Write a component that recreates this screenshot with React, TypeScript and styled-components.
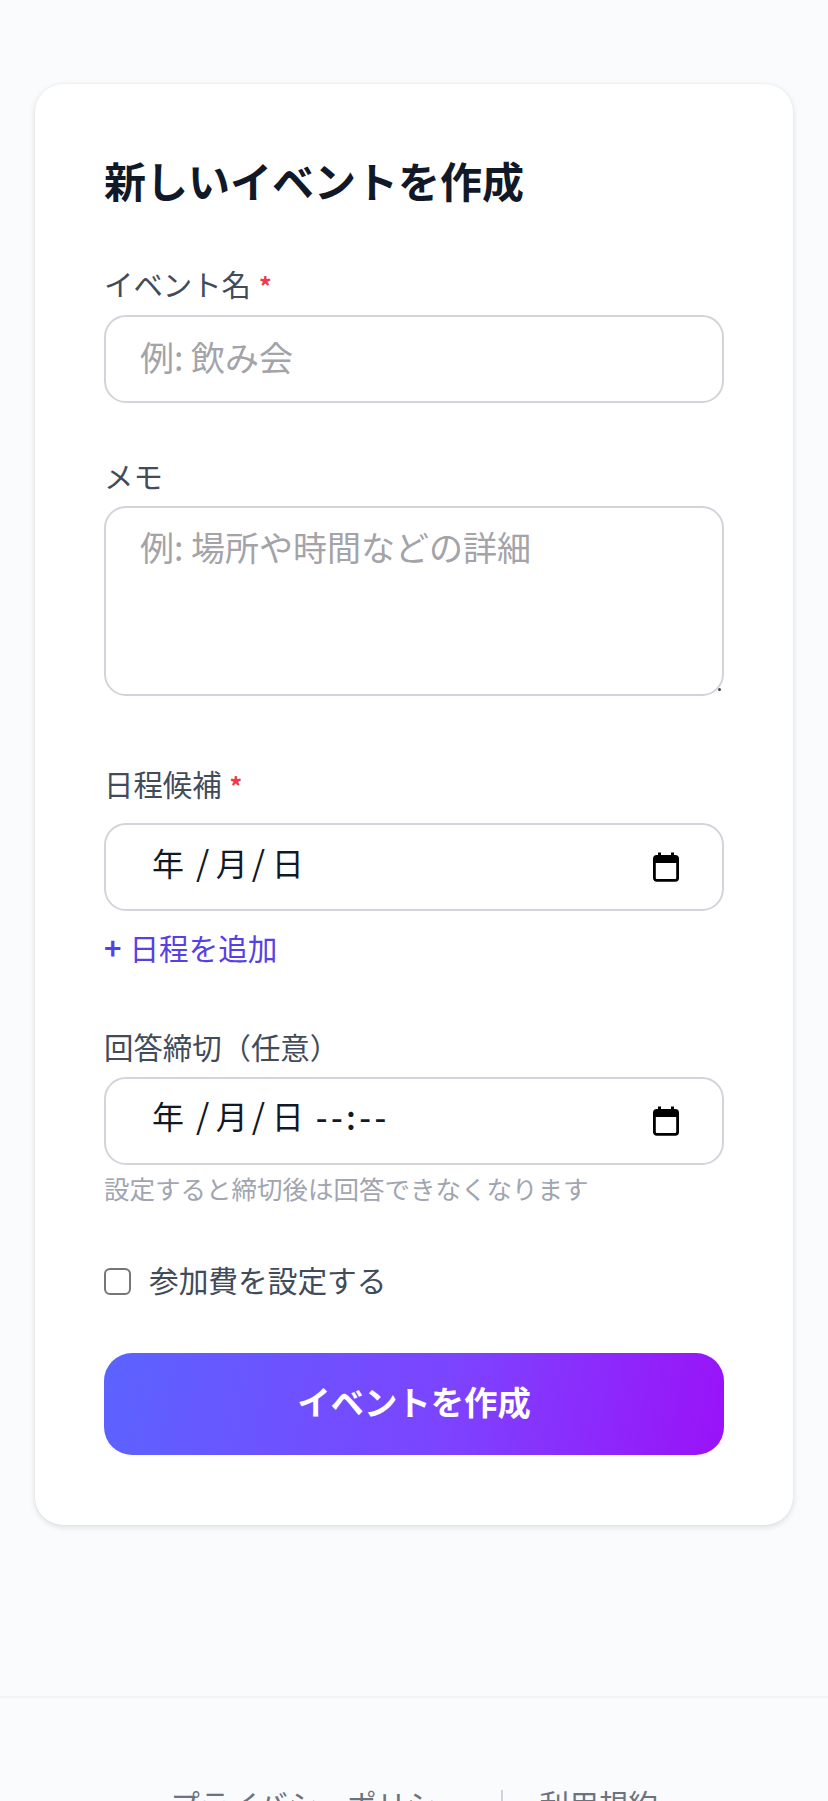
import React from 'react';
import styled, { createGlobalStyle } from 'styled-components';

const GlobalStyle = createGlobalStyle`
  html, body {
    margin: 0;
    height: 1801px;
    overflow: hidden;
    background: #fafbfd;
    font-family: "Noto Sans CJK JP", "Liberation Sans", sans-serif;
  }
  * { box-sizing: border-box; }
`;

const s = {
  Page: styled.div`
    width: 828px;
    padding-top: 84px;
  `,
  Card: styled.form`
    width: 758px;
    margin: 0 35px;
    padding: 72px 69px 70px;
    background: #fff;
    border-radius: 28px;
    box-shadow: 0 2px 6px rgba(0, 0, 0, 0.12), 0 0 2px rgba(0, 0, 0, 0.06);
  `,
  Title: styled.h1`
    margin: 0;
    font-size: 42px;
    line-height: 48px;
    font-weight: 700;
    color: #111827;
  `,
  Group: styled.div<{ $top: number }>`
    margin-top: ${(p) => p.$top}px;
  `,
  Label: styled.label<{ $gap: number }>`
    display: block;
    margin-bottom: ${(p) => p.$gap}px;
    font-size: 29.4px;
    line-height: 40px;
    color: #414b5a;
  `,
  Required: styled.span`
    margin-left: 8px;
    font-size: 25px;
    line-height: 0;
    font-weight: 700;
    color: #f0384a;
  `,
  Input: styled.input`
    display: block;
    width: 100%;
    height: 88px;
    padding: 0 34px 6px;
    border: 2px solid #d1d5db;
    border-radius: 22px;
    background: #fff;
    outline: none;
    font: inherit;
    font-size: 34px;
    color: #111827;
    &::placeholder { color: #a3a3a8; opacity: 1; }
  `,
  TextareaWrap: styled.div`
    position: relative;
    &::after {
      content: '';
      position: absolute;
      right: 3px;
      bottom: 5px;
      width: 3px;
      height: 3px;
      border-radius: 50%;
      background: #444;
    }
  `,
  Textarea: styled.textarea`
    display: block;
    width: 100%;
    height: 190px;
    padding: 19px 34px;
    border: 2px solid #d1d5db;
    border-radius: 22px;
    background: #fff;
    outline: none;
    resize: none;
    font: inherit;
    font-size: 34px;
    line-height: 40px;
    color: #111827;
    &::placeholder { color: #a3a3a8; opacity: 1; }
  `,
  DateField: styled.div`
    display: flex;
    align-items: center;
    height: 88px;
    padding: 0 42px 10px 46px;
    border: 2px solid #d1d5db;
    border-radius: 22px;
    background: #fff;
    font-size: 32px;
    color: #111827;
  `,
  DateText: styled.span`
    display: flex;
    flex: 1;
    white-space: pre;
  `,
  Slash: styled.span<{ $left: number }>`
    margin: 0 6.5px 0 ${(p) => p.$left}px;
    font-size: 34px;
    line-height: 46px;
  `,
  Time: styled.span`
    margin-left: 12px;
    font-size: 33px;
    font-weight: 500;
    letter-spacing: 3.4px;
  `,
  IconBox: styled.span`
    display: flex;
    margin-top: 10px;
  `,
  AddLink: styled.button`
    display: block;
    margin-top: 17px;
    padding: 0;
    border: none;
    background: none;
    font: inherit;
    font-size: 29.6px;
    line-height: 40px;
    color: #5641e5;
  `,
  Plus: styled.span`
    margin-right: 8px;
    font-weight: 700;
  `,
  Hint: styled.p`
    margin: 5px 0 0;
    font-size: 25.5px;
    line-height: 36px;
    color: #a0a5b0;
  `,
  CheckRow: styled.label`
    display: flex;
    align-items: center;
    gap: 18px;
    height: 40px;
    margin-top: 55px;
    font-size: 29.7px;
    color: #414b5a;
  `,
  CheckText: styled.span`
    margin-top: -4px;
  `,
  Check: styled.input`
    appearance: none;
    width: 27px;
    height: 27px;
    margin: 0;
    border: 2px solid #767676;
    border-radius: 6px;
    background: #fff;
  `,
  Submit: styled.button`
    display: block;
    width: 100%;
    height: 102px;
    margin-top: 52px;
    padding: 0 0 8px;
    border: none;
    border-radius: 28px;
    background: linear-gradient(100deg, #5b63ff 0%, #7c44ff 55%, #9a12f8 100%);
    font: inherit;
    font-size: 33.4px;
    font-weight: 700;
    color: #fff;
  `,
  Footer: styled.footer`
    display: flex;
    justify-content: center;
    align-items: center;
    gap: 36px;
    margin-top: 171px;
    padding: 86px 0 0 0;
    border-top: 2px solid #f3f4f6;
    font-size: 29.6px;
    line-height: 40px;
    color: #6b7280;
  `,
  Divider: styled.span`
    width: 2px;
    height: 28px;
    background: #d1d5db;
  `,
};

const CalendarIcon = () => (
  <s.IconBox>
    <svg width="28" height="30" viewBox="0 0 28 30" fill="none">
      <rect x="2.4" y="4.4" width="23.2" height="24" rx="2.4" stroke="#000" strokeWidth="2.8" />
      <rect x="2" y="4" width="24" height="7" fill="#000" />
      <rect x="6" y="0.5" width="3" height="5" fill="#000" />
      <rect x="19" y="0.5" width="3" height="5" fill="#000" />
    </svg>
  </s.IconBox>
);

const DateInput = ({ time }: { time?: string }) => (
  <s.DateField>
    <s.DateText>
      年<s.Slash $left={12}>/</s.Slash>月<s.Slash $left={4}>/</s.Slash>日
      {time && <s.Time>{time}</s.Time>}
    </s.DateText>
    <CalendarIcon />
  </s.DateField>
);

const App = (): JSX.Element => {
  return (
    <s.Page>
      <GlobalStyle />
      <s.Card>
        <s.Title>新しいイベントを作成</s.Title>
        <s.Group $top={59}>
          <s.Label $gap={12}>
            イベント名<s.Required>*</s.Required>
          </s.Label>
          <s.Input placeholder="例: 飲み会" />
        </s.Group>
        <s.Group $top={52}>
          <s.Label $gap={11}>メモ</s.Label>
          <s.TextareaWrap>
            <s.Textarea placeholder="例: 場所や時間などの詳細" />
          </s.TextareaWrap>
        </s.Group>
        <s.Group $top={67}>
          <s.Label $gap={20}>
            日程候補<s.Required>*</s.Required>
          </s.Label>
          <DateInput />
          <s.AddLink type="button">
            <s.Plus>+</s.Plus>日程を追加
          </s.AddLink>
        </s.Group>
        <s.Group $top={58}>
          <s.Label $gap={11}>回答締切（任意）</s.Label>
          <DateInput time="--:--" />
          <s.Hint>設定すると締切後は回答できなくなります</s.Hint>
        </s.Group>
        <s.CheckRow>
          <s.Check type="checkbox" />
          <s.CheckText>参加費を設定する</s.CheckText>
        </s.CheckRow>
        <s.Submit type="button">イベントを作成</s.Submit>
      </s.Card>
      <s.Footer>
        <span>プライバシーポリシー</span>
        <s.Divider />
        <span>利用規約</span>
      </s.Footer>
    </s.Page>
  );
};

export default App;
